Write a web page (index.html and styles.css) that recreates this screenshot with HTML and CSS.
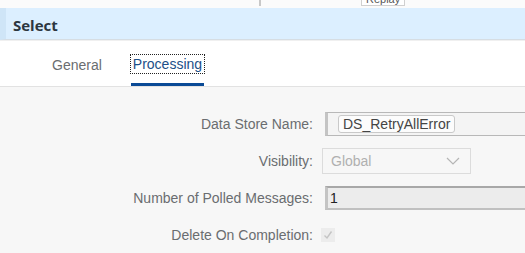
FILE: index.html
```html
<!DOCTYPE html>
<html lang="en">
<head>
  <meta charset="UTF-8" />
  <title>Select - Processing</title>
  <link rel="stylesheet" href="styles.css">
</head>
<body>

  <div class="topstrip">
    <span class="tick"></span>
    <span class="replay">Replay</span>
  </div>

  <div class="header">Select</div>

  <div class="tabs">
    <span class="tab">General</span>
    <span class="tab active"><span class="focus">Processing</span></span>
  </div>

  <div class="content">
    <div class="form">
      <label>Data Store Name:</label>
      <div class="input wide">
        <span class="token">DS_RetryAllError</span>
      </div>

      <label>Visibility:</label>
      <div class="select">
        <span>Global</span>
        <svg width="14" height="8" viewBox="0 0 14 8"><path d="M1 1 L7 7 L13 1" fill="none" stroke="#b5b5b5" stroke-width="1.2"/></svg>
      </div>

      <label>Number of Polled Messages:</label>
      <div class="input wide num">1</div>

      <label>Delete On Completion:</label>
      <div class="check">
        <svg width="10" height="10" viewBox="0 0 10 10"><path d="M1.5 5.5 L4 8 L8.5 1.5" fill="none" stroke="#c4c4c4" stroke-width="1.4"/></svg>
      </div>
    </div>
  </div>

</body>
</html>
```

FILE: styles.css
```css
body {
  margin: 0;
  font-family: "Liberation Sans", Arial, sans-serif;
  background: #f7f7f7;
  overflow: hidden;
}
.topstrip {
  position: relative;
  height: 8px;
  background: #fbfbfb;
  overflow: hidden;
}
.tick {
  position: absolute;
  left: 259px;
  top: 0;
  width: 2px;
  height: 6px;
  background: #c8c8c8;
}
.replay {
  position: absolute;
  left: 361px;
  top: -8px;
  padding: 0 4px;
  border: 1px solid #d0d0d0;
  background: #fff;
  font-size: 11px;
  line-height: 12px;
  color: #555;
}
.header {
  height: 28px;
  line-height: 28px;
  padding-top: 3px;
  background: #dcefff;
  border-left: 6px solid #cfe5f7;
  border-bottom: 1px solid #d6dde3;
  padding-left: 7px;
  font-family: "Open Sans", sans-serif;
  font-weight: bold;
  font-size: 15px;
  color: #2c3640;
}
.tabs {
  display: flex;
  gap: 29px;
  height: 45px;
  padding-left: 52px;
  background: #fff;
  border-top: 1px solid #f0f0f0;
  border-bottom: 1px solid #e2e2e2;
  font-size: 14px;
}
.tab {
  display: flex;
  align-items: center;
  color: #6a6d70;
  height: 100%;
  box-sizing: border-box;
  padding-top: 2px;
}
.tab.active {
  color: #1c4f88;
  border-bottom: 3px solid #0a4a96;
  padding-top: 4px;
}
.focus {
  outline: 1px dotted #222;
  padding: 1px 2px;
}
.content {
  padding-top: 24px;
}
.form {
  display: grid;
  grid-template-columns: 313px 1fr;
  grid-auto-rows: 26px;
  column-gap: 10px;
  row-gap: 11px;
  align-items: center;
  font-size: 14px;
}
label {
  text-align: right;
  color: #6a6d70;
}
.input {
  height: 24px;
  box-sizing: border-box;
  border: 1px solid #b8b8b8;
  border-left: 3px solid #c4c4c4;
  border-right: none;
  background: #f4f4f4;
  display: flex;
  align-items: center;
  margin-left: 2px;
}
.token {
  margin-left: 10px;
  padding: 0 4px;
  border: 1px solid #c9c9c9;
  border-radius: 3px;
  background: #fcfcfc;
  color: #444;
}
.num {
  background: #ececec;
  border-top: 2px solid #a8a8a8;
  border-bottom: 2px solid #c0c0c0;
  padding-left: 2px;
  color: #222;
}
.select {
  width: 149px;
  height: 26px;
  box-sizing: border-box;
  margin-left: -1px;
  border: 1px solid #dcdcdc;
  background: #f7f7f7;
  display: flex;
  align-items: center;
  justify-content: space-between;
  padding: 0 10px 0 8px;
  color: #b0b0b0;
}
.check {
  width: 14px;
  height: 14px;
  margin-left: -2px;
  background: #ececec;
  display: flex;
  align-items: center;
  justify-content: center;
}
```
